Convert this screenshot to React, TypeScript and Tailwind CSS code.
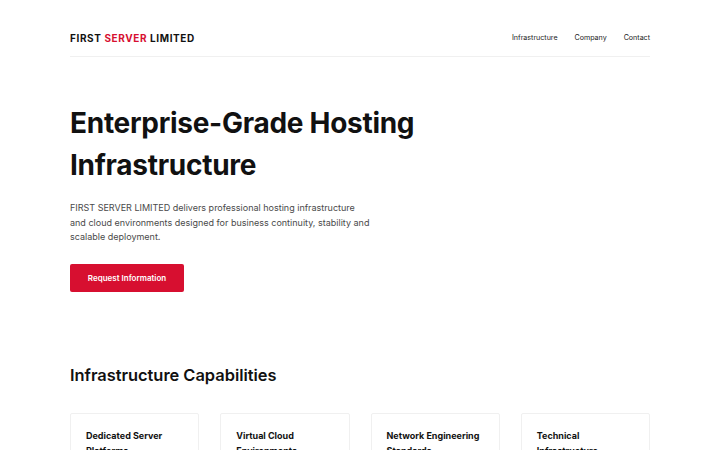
const capabilities = [
  "Dedicated Server Platforms",
  "Virtual Cloud Environments",
  "Network Engineering Standards",
  "Technical Infrastructure Support",
];

export default function App() {
  return (
    <div className="min-h-screen bg-white font-['Inter',sans-serif] text-[#111]">
      <div className="mx-auto w-[580px]">
        <header className="flex items-center justify-between border-b border-[#f0f0f0] pt-[31px] pb-[10px]">
          <div className="text-[10px] font-bold tracking-[0.06em]">
            FIRST <span className="text-[#d70f30]">SERVER</span> LIMITED
          </div>
          <nav className="flex gap-[17px] text-[7.1px] text-[#222]">
            <a href="#">Infrastructure</a>
            <a href="#">Company</a>
            <a href="#">Contact</a>
          </nav>
        </header>

        <section className="pt-[45px]">
          <h1 className="w-[360px] text-[28px] leading-[42px] font-bold tracking-[-0.01em]">
            Enterprise-Grade Hosting Infrastructure
          </h1>
          <p className="mt-[15px] w-[301px] text-[9px] leading-[14.5px] text-[#4a4a4a]">
            FIRST SERVER LIMITED delivers professional hosting infrastructure and cloud environments designed for
            business continuity, stability and scalable deployment.
          </p>
          <button className="mt-[19px] h-[28px] w-[114px] rounded-[2px] bg-[#d70f30] text-[8px] font-semibold text-white">
            Request Information
          </button>
        </section>

        <section className="pt-[71px]">
          <h2 className="text-[16.4px] font-semibold leading-[24px]">Infrastructure Capabilities</h2>
          <div className="mt-[26px] grid grid-cols-4 gap-[21px]">
            {capabilities.map((title) => (
              <div key={title} className="rounded-[2px] border border-[#f0f0f0] px-[15px] pt-[14px] pb-[20px]">
                <h3 className="text-[9px] font-bold leading-[15px]">{title}</h3>
              </div>
            ))}
          </div>
        </section>
      </div>
    </div>
  );
}
